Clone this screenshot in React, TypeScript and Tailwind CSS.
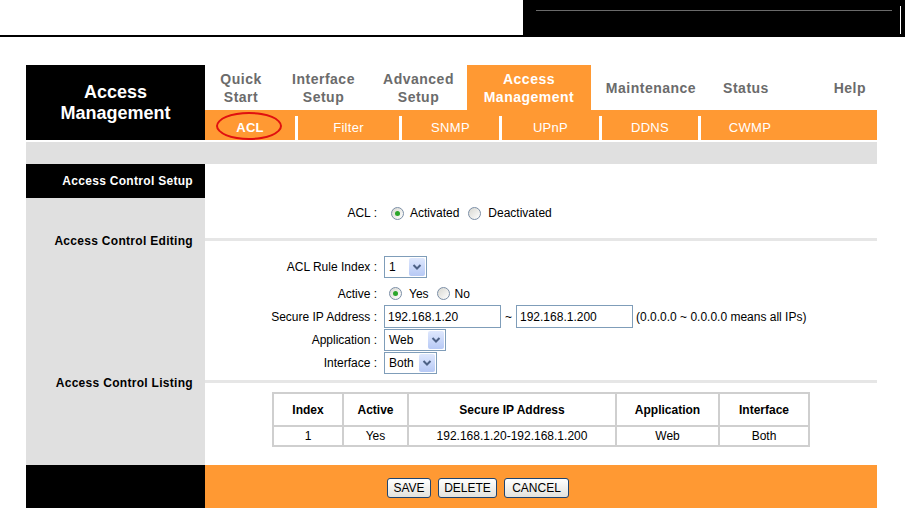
// Access Management — ACL page of the router admin UI
const navItems = [
  { lines: ['Quick', 'Start'], w: 'w-[72px]' },
  { lines: ['Interface', 'Setup'], w: 'w-[93px]' },
  { lines: ['Advanced', 'Setup'], w: 'w-[97px]' },
  { lines: ['Access', 'Management'], w: 'w-[124px]', active: true },
  { lines: ['Maintenance'], w: 'w-[120px]' },
  { lines: ['Status'], w: 'w-[70px]' },
];

const subItems = [
  { label: 'ACL', w: 'w-[90px]', active: true },
  { label: 'Filter', w: 'w-[101px]' },
  { label: 'SNMP', w: 'w-[97px]' },
  { label: 'UPnP', w: 'w-[97px]' },
  { label: 'DDNS', w: 'w-[96px]' },
  { label: 'CWMP', w: 'w-[98px]' },
];

function Radio({ checked }: { checked?: boolean }) {
  return (
    <span className="inline-flex h-[13px] w-[13px] shrink-0 items-center justify-center rounded-full border border-[#7b8ea6] bg-gradient-to-br from-[#d8d8d2] to-white">
      {checked && <span className="h-[5px] w-[5px] rounded-full bg-[#2aa52a]" />}
    </span>
  );
}

function Select({ value, w }: { value: string; w: string }) {
  return (
    <div className={`flex h-[22px] items-center border border-[#7f9db9] bg-white ${w}`}>
      <span className="flex-1 pl-[4px] text-[12px] leading-none">{value}</span>
      <span className="mr-[1px] flex h-[18px] w-[16px] items-center justify-center rounded-[2px] bg-gradient-to-b from-[#dfe8fd] to-[#b7c9f5]">
        <svg width="10" height="8" viewBox="0 0 10 8">
          <polyline points="1.5,2 5,5.5 8.5,2" fill="none" stroke="#4d6185" strokeWidth="2" />
        </svg>
      </span>
    </div>
  );
}

function Row({ label, children, h }: { label: string; children: React.ReactNode; h: string }) {
  return (
    <div className={`flex items-center ${h}`}>
      <div className="w-[179px] pr-[7px] text-right text-[12px]">{label}</div>
      <div className="flex items-center text-[12px]">{children}</div>
    </div>
  );
}

function Btn({ label, w }: { label: string; w: string }) {
  return (
    <button
      type="button"
      className={`flex h-[20px] items-center justify-center rounded-[3px] border border-[#1f446f] bg-gradient-to-b from-white to-[#e3e2dc] text-[12px] text-black ${w}`}
    >
      {label}
    </button>
  );
}

export default function App() {
  return (
    <div className="h-[508px] w-[905px] overflow-hidden bg-white font-['Liberation_Sans',Arial,sans-serif] text-black">
      {/* top strip */}
      <div className="flex h-[37px]">
        <div className="flex-1 border-b-2 border-black" />
        <div className="flex w-[382px] bg-black">
          <div className="flex-1 pl-[13px] pt-[10px]">
            <div className="h-px w-[356px] bg-[#6a6a6a]" />
          </div>
          <div className="mr-[4px] mt-[6px] h-[28px] w-px bg-white" />
        </div>
      </div>

      <div className="ml-[26px] mt-[28px] w-[851px]">
        {/* header */}
        <div className="flex h-[75px]">
          <div className="flex w-[179px] flex-col items-center justify-center bg-black text-[18px] font-bold leading-[21px] text-white">
            <span>Access</span>
            <span>Management</span>
          </div>
          <div className="flex flex-1 flex-col">
            <div className="flex h-[45px]">
              {navItems.map((n) => (
                <div
                  key={n.lines.join(' ')}
                  className={`flex flex-col items-center justify-center text-[14px] font-bold leading-[18px] tracking-[0.5px] ${n.w} ${
                    n.active ? 'bg-[#ff9933] text-white' : 'text-[#6b6b6b]'
                  }`}
                >
                  {n.lines.map((l) => (
                    <span key={l}>{l}</span>
                  ))}
                </div>
              ))}
              <div className="flex flex-1 items-center justify-end pr-[11px] pt-[2px] text-[14px] font-bold tracking-[0.5px] text-[#6b6b6b]">
                Help
              </div>
            </div>
            <div className="flex h-[30px] bg-[#ff9933]">
              {subItems.map((s, i) => (
                <div key={s.label} className="flex">
                  {i > 0 && <div className="mt-[6px] h-[24px] w-[3px] bg-white" />}
                  <div
                    className={`relative flex items-center justify-center pt-[5px] text-[13px] tracking-[0.3px] text-white ${s.w} ${
                      s.active ? 'font-bold' : ''
                    }`}
                  >
                    {s.label}
                    {s.active && (
                      <span className="absolute left-[11px] top-[2px] h-[28px] w-[66px] rounded-[50%] border-2 border-[#e01010]" />
                    )}
                  </div>
                </div>
              ))}
            </div>
          </div>
        </div>

        <div className="mt-[2px] h-[22px] bg-[#e0e0e0]" />

        {/* body */}
        <div className="flex">
          <div className="flex w-[179px] flex-col text-[12px] font-bold tracking-[0.3px]">
            <div className="flex h-[34px] items-center justify-end bg-black pr-[12px] text-white">Access Control Setup</div>
            <div className="flex h-[267px] flex-col items-end bg-[#e0e0e0] pr-[12px]">
              <span className="mt-[34px]">Access Control Editing</span>
              <span className="mt-[124px]">Access Control Listing</span>
            </div>
          </div>

          <div className="flex flex-1 flex-col">
            <div className="h-[74px] pt-[39px]">
              <Row label="ACL :" h="h-[20px]">
                <span className="ml-[7px]" />
                <Radio checked />
                <span className="ml-[6px]">Activated</span>
                <span className="ml-[9px]" />
                <Radio />
                <span className="ml-[7px]">Deactivated</span>
              </Row>
            </div>
            <div className="h-[3px] bg-[#e6e6e6]" />

            <div className="flex h-[139px] flex-col pt-[15px]">
              <Row label="ACL Rule Index :" h="h-[22px] mb-[4px]">
                <Select value="1" w="w-[43px]" />
              </Row>
              <Row label="Active :" h="h-[23px]">
                <span className="ml-[5px]" />
                <Radio checked />
                <span className="ml-[7px]">Yes</span>
                <span className="ml-[8px]" />
                <Radio />
                <span className="ml-[5px]">No</span>
              </Row>
              <Row label="Secure IP Address :" h="h-[23px]">
                <div className="flex h-[23px] w-[117px] items-center border border-[#7f9db9] pl-[3px]">192.168.1.20</div>
                <span className="mx-[4px]">~</span>
                <div className="flex h-[23px] w-[117px] items-center border border-[#7f9db9] pl-[3px]">192.168.1.200</div>
                <span className="ml-[3px]">(0.0.0.0 ~ 0.0.0.0 means all IPs)</span>
              </Row>
              <Row label="Application :" h="h-[23px]">
                <Select value="Web" w="w-[62px]" />
              </Row>
              <Row label="Interface :" h="h-[23px]">
                <Select value="Both" w="w-[53px]" />
              </Row>
            </div>
            <div className="h-[3px] bg-[#e6e6e6]" />

            <div className="h-[82px] pl-[67px] pt-[9px]">
              <table className="w-[538px] border-separate border-spacing-0 border border-[#cfcfcf] text-center text-[12px]">
                <thead>
                  <tr className="h-[33px] font-bold">
                    <th className="w-[70px] border border-[#cfcfcf]">Index</th>
                    <th className="w-[65px] border border-[#cfcfcf]">Active</th>
                    <th className="w-[208px] border border-[#cfcfcf]">Secure IP Address</th>
                    <th className="w-[103px] border border-[#cfcfcf]">Application</th>
                    <th className="border border-[#cfcfcf]">Interface</th>
                  </tr>
                </thead>
                <tbody>
                  <tr className="h-[19px]">
                    <td className="border border-[#cfcfcf]">1</td>
                    <td className="border border-[#cfcfcf]">Yes</td>
                    <td className="border border-[#cfcfcf]">192.168.1.20-192.168.1.200</td>
                    <td className="border border-[#cfcfcf]">Web</td>
                    <td className="border border-[#cfcfcf]">Both</td>
                  </tr>
                </tbody>
              </table>
            </div>
          </div>
        </div>

        {/* footer */}
        <div className="flex h-[50px]">
          <div className="w-[179px] bg-black" />
          <div className="flex flex-1 gap-[7px] bg-[#ff9933] pl-[182px] pt-[13px]">
            <Btn label="SAVE" w="w-[44px]" />
            <Btn label="DELETE" w="w-[59px]" />
            <Btn label="CANCEL" w="w-[65px]" />
          </div>
        </div>
      </div>
    </div>
  );
}
